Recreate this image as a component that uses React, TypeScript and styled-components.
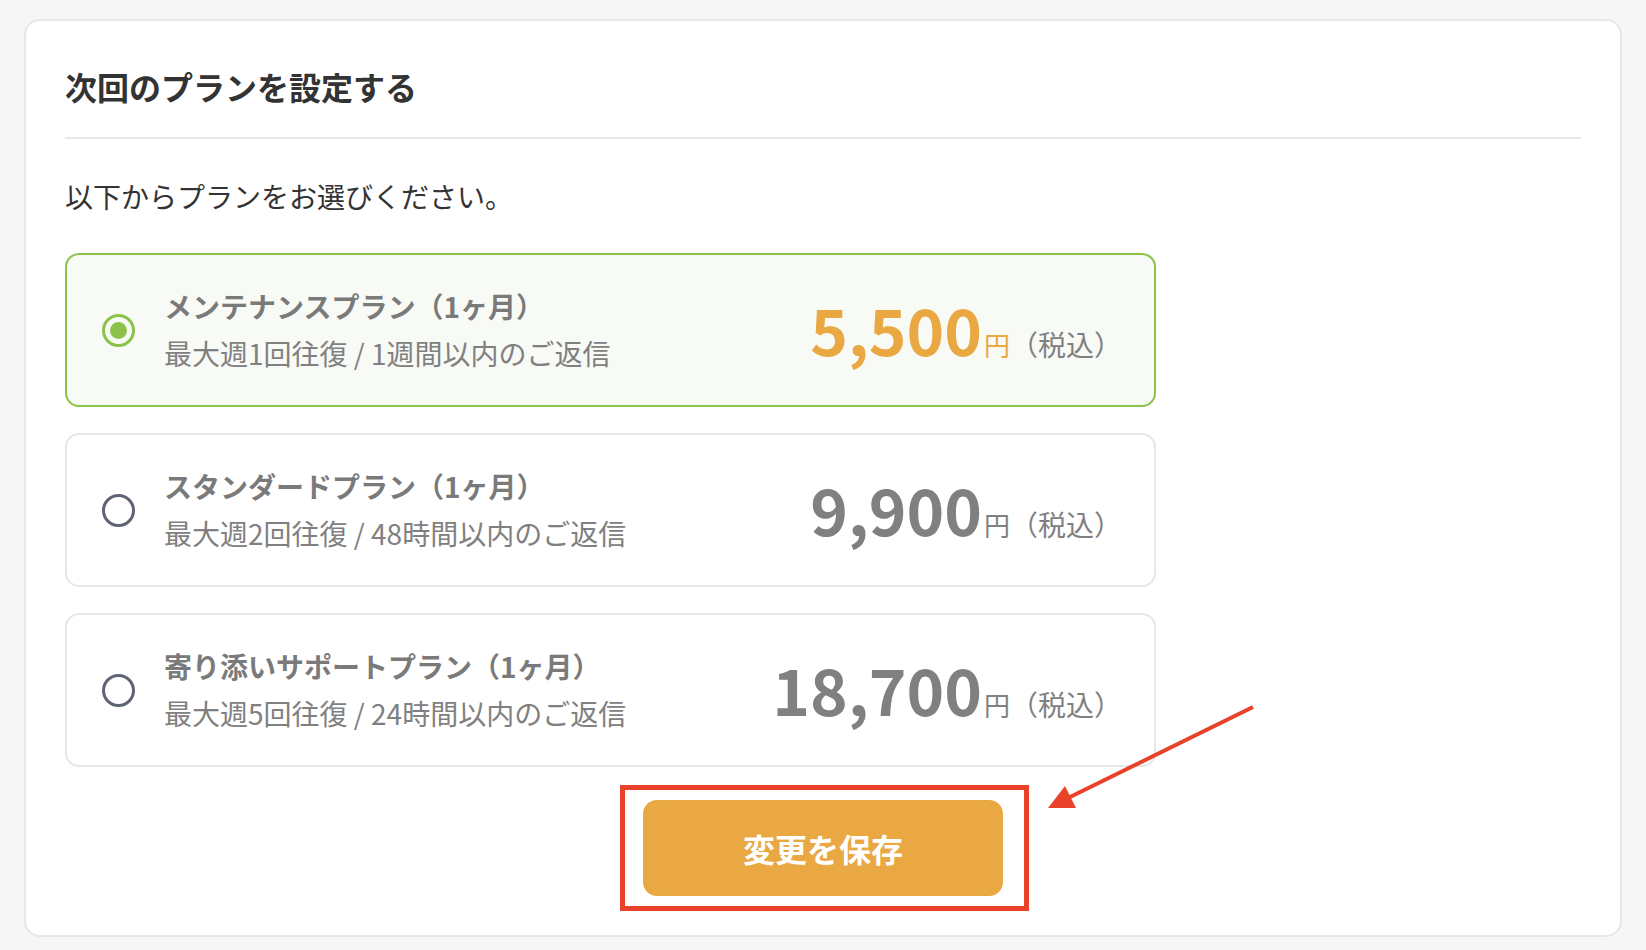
import { useState } from "react";
import styled, { createGlobalStyle } from "styled-components";

const GlobalStyle = createGlobalStyle`
    body {
        margin: 0;
        background-color: #f6f6f6;
        font-family: "Noto Sans CJK JP", "Noto Sans", sans-serif;
        color: #333333;
    }
`;

const Page = styled.div`
    padding: 19px 24px 13px;
`;

const Panel = styled.section`
    background-color: #ffffff;
    border: 2px solid #e6e6eb;
    border-radius: 16px;
    padding: 41px 39px 39px;
`;

const Title = styled.h2`
    margin: 0;
    font-size: 32px;
    font-weight: 700;
    line-height: 48px;
    color: #333333;
    padding-bottom: 27px;
    border-bottom: 2px solid #e6e6eb;
`;

const Lead = styled.p`
    margin: 35px 0 35px;
    font-size: 28px;
    line-height: 44px;
    color: #333333;
`;

const PlanList = styled.div`
    display: flex;
    flex-direction: column;
    gap: 26px;
    width: 1091px;
`;

const PlanCard = styled.label<{ $selected: boolean }>`
    display: flex;
    align-items: center;
    box-sizing: border-box;
    height: 154px;
    padding: 0 32px 0 35px;
    border: 2px solid ${(p) => (p.$selected ? "#8bc34a" : "#e6e6eb")};
    border-radius: 14px;
    background-color: ${(p) => (p.$selected ? "#f8faf6" : "#ffffff")};
    cursor: pointer;

    input {
        display: none;
    }
`;

const Radio = styled.span<{ $selected: boolean }>`
    display: flex;
    align-items: center;
    justify-content: center;
    flex-shrink: 0;
    box-sizing: border-box;
    width: 33px;
    height: 33px;
    border-radius: 50%;
    border: 3px solid ${(p) => (p.$selected ? "#8bc34a" : "#5f6474")};

    &::after {
        content: "";
        display: ${(p) => (p.$selected ? "block" : "none")};
        width: 17px;
        height: 17px;
        border-radius: 50%;
        background-color: #8bc34a;
    }
`;

const PlanText = styled.div`
    flex: 1;
    display: flex;
    flex-direction: column;
    margin-left: 29px;
`;

const PlanName = styled.div`
    font-size: 28px;
    font-weight: 700;
    line-height: 46px;
    color: #7a7a7a;
`;

const PlanDesc = styled.div`
    font-size: 28px;
    line-height: 48px;
    color: #808080;
`;

const Price = styled.div<{ $selected: boolean }>`
    display: flex;
    align-items: baseline;
    color: ${(p) => (p.$selected ? "#e9a842" : "#808080")};
`;

const Amount = styled.span`
    font-size: 64px;
    font-weight: 700;
    line-height: 1;
`;

const Yen = styled.span`
    font-size: 26px;
    margin-left: 2px;
`;

const Tax = styled.span`
    font-size: 28px;
    color: #808080;
`;

const Actions = styled.div`
    display: flex;
    justify-content: center;
    margin-top: 33px;
`;

const SaveWrap = styled.div`
    position: relative;
`;

const SaveButton = styled.button`
    display: block;
    width: 360px;
    height: 96px;
    border: none;
    border-radius: 14px;
    background-color: #e9a842;
    color: #ffffff;
    font-family: "Noto Sans CJK JP", "Noto Sans", sans-serif;
    font-size: 32px;
    font-weight: 700;
    cursor: pointer;
`;

const Highlight = styled.div`
    position: absolute;
    top: -15px;
    left: -23px;
    right: -26px;
    bottom: -15px;
    border: 5px solid #e8432a;
    pointer-events: none;
`;

const Arrow = styled.svg`
    position: absolute;
    left: 395px;
    top: -100px;
    width: 220px;
    height: 120px;
    overflow: visible;
    pointer-events: none;
`;

const plans = [
    { id: "maintenance", name: "メンテナンスプラン（1ヶ月）", desc: "最大週1回往復 / 1週間以内のご返信", price: "5,500" },
    { id: "standard", name: "スタンダードプラン（1ヶ月）", desc: "最大週2回往復 / 48時間以内のご返信", price: "9,900" },
    { id: "support", name: "寄り添いサポートプラン（1ヶ月）", desc: "最大週5回往復 / 24時間以内のご返信", price: "18,700" },
];

function App() {
    const [selected, setSelected] = useState("maintenance");

    return (
        <Page>
            <GlobalStyle />
            <Panel>
                <Title>次回のプランを設定する</Title>
                <Lead>以下からプランをお選びください。</Lead>
                <PlanList>
                    {plans.map((plan) => {
                        const isSelected = plan.id === selected;
                        return (
                            <PlanCard key={plan.id} $selected={isSelected}>
                                <input
                                    type="radio"
                                    name="plan"
                                    value={plan.id}
                                    checked={isSelected}
                                    onChange={() => setSelected(plan.id)}
                                />
                                <Radio $selected={isSelected} />
                                <PlanText>
                                    <PlanName>{plan.name}</PlanName>
                                    <PlanDesc>{plan.desc}</PlanDesc>
                                </PlanText>
                                <Price $selected={isSelected}>
                                    <Amount>{plan.price}</Amount>
                                    <Yen>円</Yen>
                                    <Tax>（税込）</Tax>
                                </Price>
                            </PlanCard>
                        );
                    })}
                </PlanList>
                <Actions>
                    <SaveWrap>
                        <SaveButton type="button">変更を保存</SaveButton>
                        <Highlight />
                        <Arrow viewBox="0 0 220 120">
                            <line x1="215" y1="7" x2="30" y2="98" stroke="#e8432a" strokeWidth="4" />
                            <polygon points="10,108 27,86 38,108" fill="#e8432a" />
                        </Arrow>
                    </SaveWrap>
                </Actions>
            </Panel>
        </Page>
    );
}

export default App;
